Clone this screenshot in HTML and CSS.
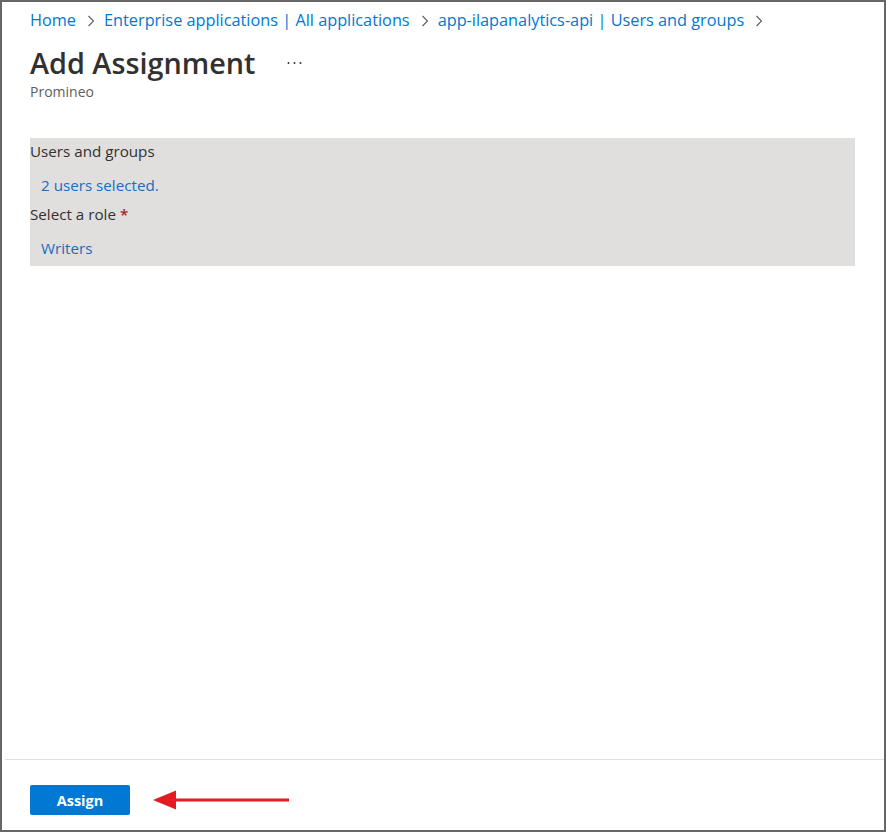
FILE: index.html
```html
<!DOCTYPE html>
<html lang="en">

<head>
    <meta charset="UTF-8">
    <meta name="viewport" content="width=device-width, initial-scale=1.0">
    <title>Add Assignment</title>

    <link rel="stylesheet" href="styles.css">
</head>

<body>
    <div class="blade">
        <header class="blade-header">
            <nav class="breadcrumb">
                <a href="#home">Home</a>
                <svg class="chevron" width="8" height="12" viewBox="0 0 8 12"><path d="M1.5 1 L6.5 6 L1.5 11" fill="none" stroke="#605e5c" stroke-width="1.1"/></svg>
                <a href="#apps">Enterprise applications | All applications</a>
                <svg class="chevron" width="8" height="12" viewBox="0 0 8 12"><path d="M1.5 1 L6.5 6 L1.5 11" fill="none" stroke="#605e5c" stroke-width="1.1"/></svg>
                <a href="#users">app-ilapanalytics-api | Users and groups</a>
                <svg class="chevron" width="8" height="12" viewBox="0 0 8 12"><path d="M1.5 1 L6.5 6 L1.5 11" fill="none" stroke="#605e5c" stroke-width="1.1"/></svg>
            </nav>
            <div class="title-row">
                <h1>Add Assignment</h1>
                <svg class="more" width="15" height="4" viewBox="0 0 15 4">
                    <circle cx="1.5" cy="2" r="1" fill="#323130"/>
                    <circle cx="7.5" cy="2" r="1" fill="#323130"/>
                    <circle cx="13.5" cy="2" r="1" fill="#323130"/>
                </svg>
            </div>
            <div class="subtitle">Promineo</div>
        </header>

        <main class="blade-content">
            <div class="panel">
                <div class="field-label">Users and groups</div>
                <a class="field-value" href="#select-users">2 users selected.</a>
                <div class="field-label">Select a role <span class="required">*</span></div>
                <a class="field-value" href="#select-role">Writers</a>
            </div>
        </main>

        <footer class="blade-footer">
            <button class="btn-primary">Assign</button>
            <svg class="arrow" width="138" height="22" viewBox="0 0 138 22">
                <path d="M18 9.5 H136 V12.5 H18 Z" fill="#e31b23"/>
                <path d="M0 11 L23 1.5 L23 20.5 Z" fill="#e31b23"/>
            </svg>
        </footer>
    </div>
</body>

</html>
```

FILE: styles.css
```css
* {
    margin: 0;
    padding: 0;
    box-sizing: border-box;
}

body {
    font-family: 'Open Sans', 'Noto Sans', sans-serif;
    color: #323130;
    background: #fff;
}

.blade {
    width: 886px;
    height: 832px;
    border: 2px solid #666;
    display: flex;
    flex-direction: column;
}

.blade-header {
    padding: 5px 29px 0 28px;
}

.breadcrumb {
    display: flex;
    align-items: center;
    height: 26px;
    font-size: 16.3px;
}

.breadcrumb a {
    color: #0078d4;
    text-decoration: none;
}

.chevron {
    margin: 1px 9px 0 11px;
}

.title-row {
    display: flex;
    align-items: center;
    margin-top: 13px;
    height: 32px;
}

.title-row h1 {
    font-size: 28.8px;
    font-weight: 600;
}

.more {
    margin: 2px 0 0 32px;
}

.subtitle {
    margin-top: 4px;
    font-size: 14px;
    color: #605e5c;
}

.blade-content {
    flex: 1;
    padding: 37px 29px 0 28px;
}

.panel {
    background: #e0dfde;
    padding-bottom: 2px;
    font-size: 15.2px;
}

.field-label {
    line-height: 26px;
}

.required {
    color: #a4262c;
    font-weight: 600;
}

.field-value {
    display: block;
    padding: 8px 11px 3px;
    line-height: 26px;
    color: #1a6dbf;
    text-decoration: none;
}

.blade-footer {
    margin-left: 3px;
    border-top: 1px solid #e0e0e0;
    padding: 25px 0 15px 25px;
    display: flex;
    align-items: center;
}

.btn-primary {
    width: 100px;
    height: 30px;
    border: none;
    border-radius: 2px;
    background: #0078d4;
    color: #fff;
    font-family: 'Open Sans', 'Noto Sans', sans-serif;
    font-size: 14.5px;
    font-weight: 700;
}

.arrow {
    margin-left: 23px;
}
```
